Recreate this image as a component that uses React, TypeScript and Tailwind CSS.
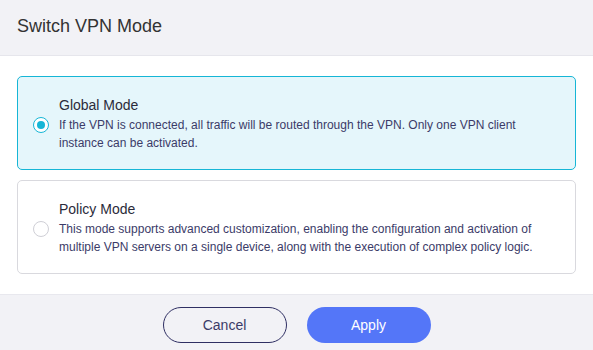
import { useState } from "react"

const modes = [
  {
    id: "global",
    title: "Global Mode",
    desc: "If the VPN is connected, all traffic will be routed through the VPN. Only one VPN client instance can be activated.",
  },
  {
    id: "policy",
    title: "Policy Mode",
    desc: "This mode supports advanced customization, enabling the configuration and activation of multiple VPN servers on a single device, along with the execution of complex policy logic.",
  },
]

export default function App() {
  const [mode, setMode] = useState("global")

  return (
    <div className="w-[593px] h-[350px] flex flex-col bg-white font-['Liberation_Sans',Arial,sans-serif]">
      <div className="h-[56px] shrink-0 flex items-center px-[17px] pb-[2px] bg-[#f2f2f6] border-b border-[#e6e6ec]">
        <h2 className="text-[18px] text-[#333333]">Switch VPN Mode</h2>
      </div>

      <div className="flex-1 flex flex-col gap-[10px] px-[17px] pt-[20px]">
        {modes.map((m) => {
          const active = mode === m.id
          return (
            <button
              key={m.id}
              onClick={() => setMode(m.id)}
              className={`h-[94px] flex items-center text-left rounded-[5px] border pl-[15px] pr-[20px] ${
                active ? "border-[#16b6d6] bg-[#e5f6fb]" : "border-[#d9d9de] bg-white"
              }`}
            >
              <span
                className={`w-[16px] h-[16px] shrink-0 mt-[4px] rounded-full flex items-center justify-center border-[1.5px] bg-white ${
                  active ? "border-[#16b6d6]" : "border-[#cfcfd6]"
                }`}
              >
                {active && <span className="w-[8px] h-[8px] rounded-full bg-[#16b6d6]" />}
              </span>
              <span className="ml-[10px] flex flex-col">
                <span className="text-[14px] text-[#2b2b3a] leading-[20px]">{m.title}</span>
                <span className="text-[12px] text-[#3b3b68] leading-[18px] mt-[1px]">{m.desc}</span>
              </span>
            </button>
          )
        })}
      </div>

      <div className="h-[56px] shrink-0 flex items-start justify-center gap-[20px] pt-[12px] bg-[#f2f2f6] border-t border-[#e8e8ee]">
        <button className="w-[124px] h-[36px] rounded-full border border-[#2f2f63] text-[14px] text-[#3b3b68] bg-transparent">
          Cancel
        </button>
        <button className="w-[124px] h-[36px] rounded-full bg-[#5476f8] text-[14px] text-white">
          Apply
        </button>
      </div>
    </div>
  )
}
